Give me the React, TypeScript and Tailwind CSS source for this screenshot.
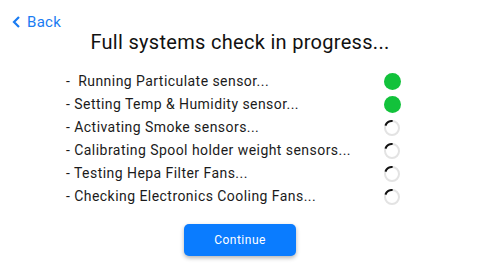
import React from "react";

const steps = [
  { label: "-  Running Particulate sensor...", done: true },
  { label: "- Setting Temp & Humidity sensor...", done: true },
  { label: "- Activating Smoke sensors...", done: false },
  { label: "- Calibrating Spool holder weight sensors...", done: false },
  { label: "- Testing Hepa Filter Fans...", done: false },
  { label: "- Checking Electronics Cooling Fans...", done: false },
];

function Spinner() {
  return (
    <svg width="16" height="16" viewBox="0 0 16 16">
      <circle cx="8" cy="8" r="7" fill="none" stroke="#e3e3e3" strokeWidth="2" />
      <path d="M1.42 5.61 A7 7 0 0 1 8.61 1.03" fill="none" stroke="#111" strokeWidth="2" />
    </svg>
  );
}

export default function App() {
  return (
    <div
      className="w-[480px] h-[272px] bg-white flex flex-col overflow-hidden"
      style={{ fontFamily: "Roboto, 'Liberation Sans', sans-serif" }}
    >
      {/* Back link */}
      <div className="pt-[14px] pl-[12px] h-[30px]">
        <button className="flex items-center gap-[6px] text-[#1a7cf2] text-[15px] leading-[16px] tracking-[0.3px]">
          <svg width="9" height="12" viewBox="0 0 9 12">
            <path d="M7 1 L2 6 L7 11" fill="none" stroke="#1a7cf2" strokeWidth="2.2" />
          </svg>
          Back
        </button>
      </div>

      <h1 className="text-center text-[20px] leading-[24px] text-[#111] tracking-[0.3px]">
        Full systems check in progress...
      </h1>

      <div className="mt-[16px] ml-[66px] flex flex-col">
        {steps.map((s) => (
          <div key={s.label} className="flex items-center h-[23px]">
            <span className="w-[318px] whitespace-pre text-[14px] tracking-[0.45px] text-[#1b1b1b]">{s.label}</span>
            {s.done ? (
              <div className="w-[17px] h-[17px] rounded-full bg-[#12c23b]" />
            ) : (
              <Spinner />
            )}
          </div>
        ))}
      </div>

      <div className="mt-[16px] flex justify-center">
        <button className="w-[112px] h-[32px] rounded-[5px] bg-[#0a7cff] text-white text-[12px] tracking-[0.5px] shadow-[0_2px_4px_rgba(0,0,0,0.3)]">
          Continue
        </button>
      </div>
    </div>
  );
}
